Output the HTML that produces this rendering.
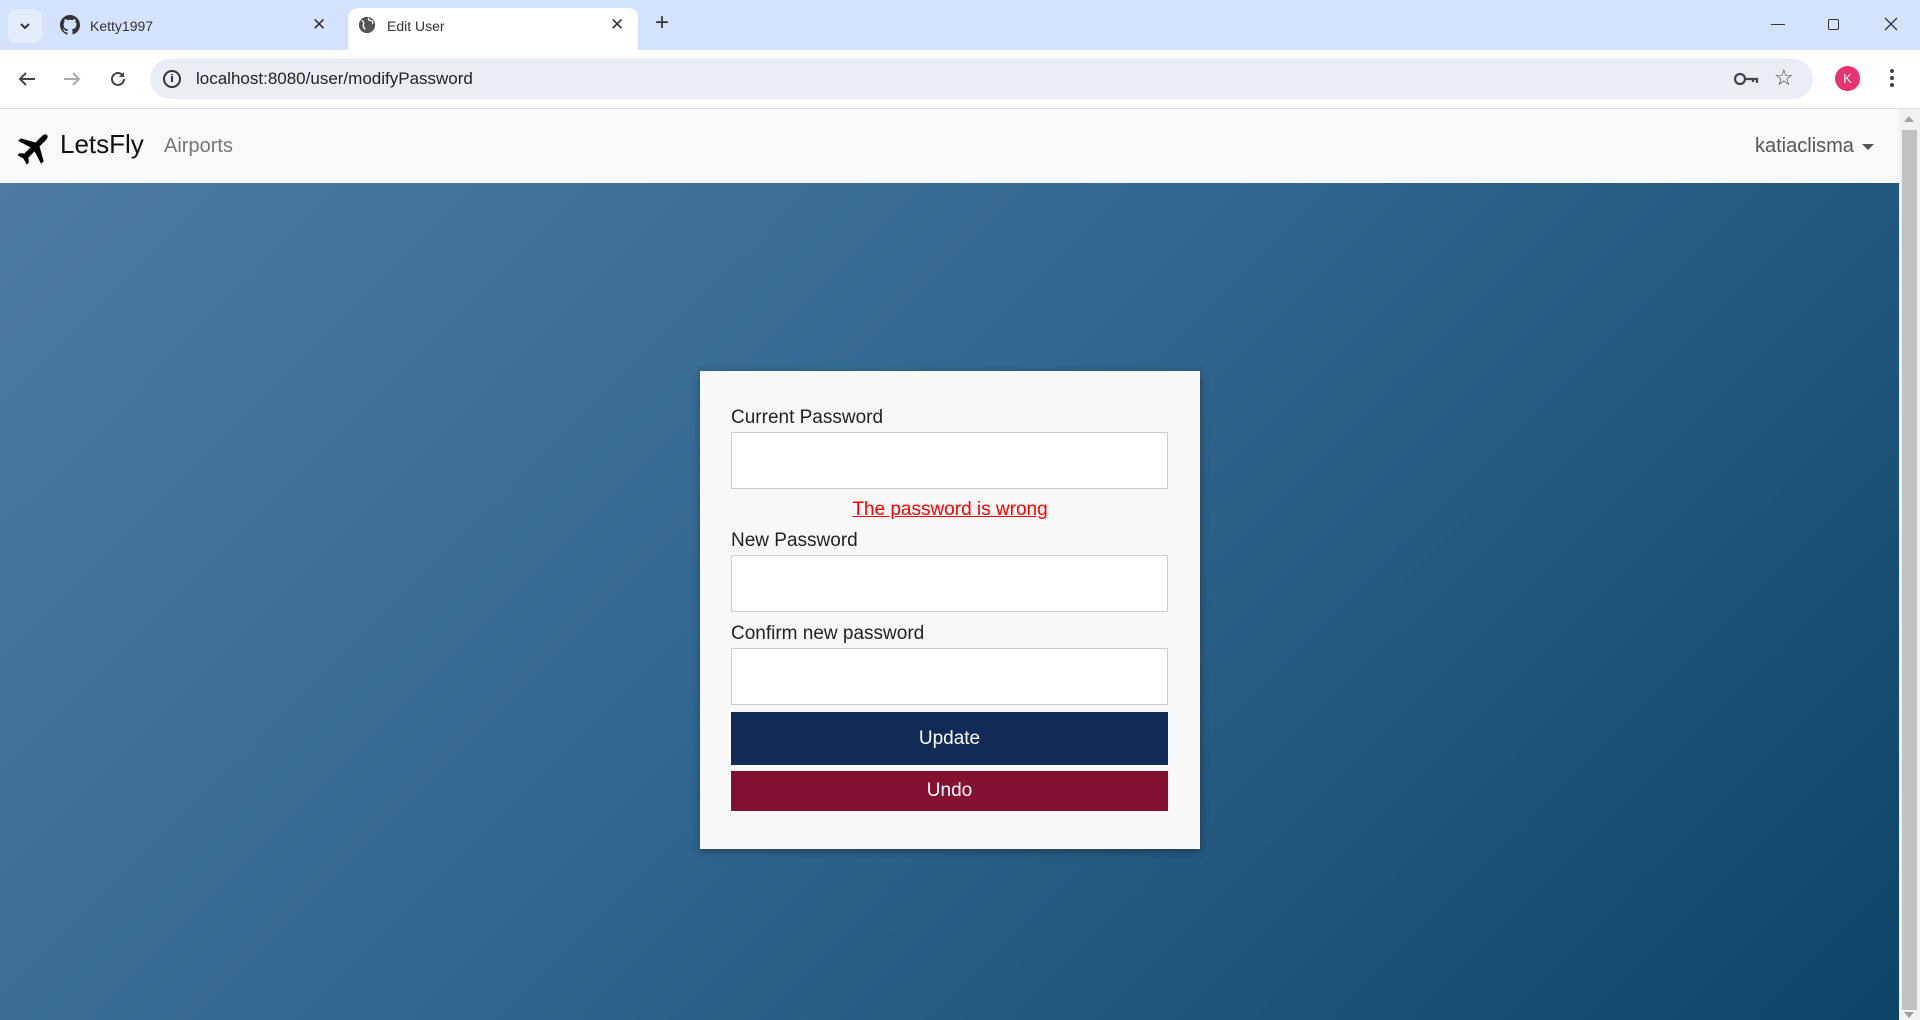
<!DOCTYPE html>
<html><head><meta charset="utf-8"><style>
*{margin:0;padding:0;box-sizing:border-box}
body{width:1920px;height:1020px;overflow:hidden;font-family:"Liberation Sans",sans-serif;position:relative;background:#fff}
.tabs{position:absolute;left:0;top:0;width:1920px;height:50px;background:#d3e3fd}
.tab{position:absolute;top:8px;height:42px;font-size:14px;color:#333}
.active{left:348px;width:290px;background:#fff;border-radius:10px 10px 0 0}
.toolbar{position:absolute;left:0;top:50px;width:1920px;height:59px;background:#fff;border-bottom:1px solid #dadce0}
.url{position:absolute;left:150px;top:9px;width:1663px;height:40px;border-radius:20px;background:#e9eef6}
.nav{position:absolute;left:0;top:109px;width:1899px;height:74px;background:#f8f9fa}
.main{position:absolute;left:0;top:183px;width:1899px;height:837px;background:linear-gradient(135deg,#4d7ba2 0%,#33678f 45%,#0f4469 100%)}
.sb{position:absolute;left:1899px;top:109px;width:21px;height:911px;background:#f1f1f1}
.card{position:absolute;left:700px;top:371px;width:500px;height:478px;background:#f8f8f8;box-shadow:0 2px 8px rgba(0,0,0,.35)}
.lbl{position:absolute;left:31px;font-size:19px;color:#222}
.inp{position:absolute;left:31px;width:437px;height:57px;background:#fff;border:1px solid #ccc}
.btn{position:absolute;left:31px;width:437px;color:#fff;font-size:19px;display:flex;align-items:center;justify-content:center}
</style></head><body>
<div class="tabs">
 <div style="position:absolute;left:8px;top:9px;width:34px;height:34px;border-radius:8px;background:#e3ecfb"></div>
 <svg style="position:absolute;left:19px;top:21px" width="12" height="10" viewBox="0 0 12 10"><path d="M2 3l4 4 4-4" stroke="#333" stroke-width="2" fill="none"/></svg>
 <div class="tab" style="left:58px;width:280px">
  <svg style="position:absolute;left:2px;top:7px" width="20" height="20" viewBox="0 0 16 16"><path fill="#333" d="M8 0C3.6 0 0 3.6 0 8c0 3.5 2.3 6.5 5.5 7.6.4.1.5-.2.5-.4v-1.4c-2.2.5-2.7-1-2.7-1-.4-.9-.9-1.2-.9-1.2-.7-.5.1-.5.1-.5.8.1 1.200.8 1.2.8.7 1.2 1.9.9 2.3.7.1-.5.3-.9.5-1.1-1.8-.2-3.6-.9-3.6-4 0-.9.3-1.6.8-2.1-.1-.2-.4-1 .1-2.1 0 0 .7-.2 2.2.8.6-.2 1.3-.3 2-.3s1.4.1 2 .3c1.5-1 2.2-.8 2.2-.8.4 1.1.2 1.9.1 2.100.5.6.8 1.3.8 2.1 0 3.1-1.9 3.7-3.6 3.9.3.3.5.8.5 1.5v2.2c0 .2.1.5.6.4C13.7 14.5 16 11.5 16 8c0-4.4-3.6-8-8-8z"/></svg>
  <span style="position:absolute;left:32px;top:10px">Ketty1997</span>
  <span style="position:absolute;left:254px;top:7px;font-size:17px">✕</span>
 </div>
 <div class="tab active">
  <svg style="position:absolute;left:10px;top:8px" width="18" height="18" viewBox="0 0 20 20"><circle cx="10" cy="10" r="9" fill="#555"/><path d="M4 5c2 1 3 3 2 5s1 3 2 5M12 2c-1 2 0 3 2 3s3 2 2 4" stroke="#fff" stroke-width="1.5" fill="none"/></svg>
  <span style="position:absolute;left:39px;top:10px">Edit User</span>
  <span style="position:absolute;left:262px;top:7px;font-size:17px">✕</span>
 </div>
 <div style="position:absolute;left:655px;top:9px;font-size:24px;color:#333">+</div>
 <div style="position:absolute;left:1771px;top:24px;width:14px;height:1px;background:#333"></div>
 <div style="position:absolute;left:1828px;top:19px;width:11px;height:11px;border:1px solid #333;border-radius:2px"></div>
 <svg style="position:absolute;left:1884px;top:17px" width="14" height="14"><path d="M1 1l12 12M13 1L1 13" stroke="#333" stroke-width="1.3"/></svg>
</div>
<div class="toolbar">
 <svg style="position:absolute;left:18px;top:21px" width="18" height="16"><path d="M17 8H2M8 2L2 8l6 6" stroke="#444" stroke-width="2" fill="none"/></svg>
 <svg style="position:absolute;left:63px;top:21px" width="18" height="16"><path d="M1 8h15M10 2l6 6-6 6" stroke="#aaa" stroke-width="2" fill="none"/></svg>
 <svg style="position:absolute;left:109px;top:20px" width="18" height="18" viewBox="0 0 18 18"><path d="M15 9a6 6 0 1 1-2-4.5" stroke="#444" stroke-width="2" fill="none"/><path d="M15 2v5h-5z" fill="#444"/></svg>
 <div class="url">
  <div style="position:absolute;left:13px;top:11px;width:18px;height:18px;border:2px solid #333;border-radius:50%;font-size:11px;text-align:center;line-height:14px;font-weight:bold">i</div>
  <div style="position:absolute;left:46px;top:10px;font-size:17px;color:#222">localhost:8080/user/modifyPassword</div>
  <svg style="position:absolute;left:1583px;top:12px" width="26" height="16" viewBox="0 0 26 16"><circle cx="7" cy="8" r="5" stroke="#444" stroke-width="2.2" fill="none"/><path d="M12 8h12v4M20 8v3" stroke="#444" stroke-width="2.2" fill="none"/></svg>
  <div style="position:absolute;left:1624px;top:6px;font-size:22px;color:#444">☆</div>
 </div>
 <div style="position:absolute;left:1835px;top:16px;width:25px;height:25px;border-radius:50%;background:#e8336f;color:#fff;font-size:13px;text-align:center;line-height:25px">K</div>
 <div style="position:absolute;left:1890px;top:19px;width:4px;height:4px;border-radius:50%;background:#444;box-shadow:0 7px 0 #444,0 14px 0 #444"></div>
</div>
<div class="nav">
 <svg style="position:absolute;left:14px;top:128px;top:19px" width="40" height="40" viewBox="0 0 24 24"><g transform="rotate(45 12 12)"><path fill="#000" d="M12 1c1.1 0 1.7 1.2 1.7 2.5V9l8 4.5v2.2l-8-2.5v5.3l2.3 1.8V22L12 21l-4 1v-1.7l2.3-1.8v-5.3l-8 2.5v-2.2l8-4.5V3.5C10.3 2.2 10.9 1 12 1z"/></g></svg>
 <div style="position:absolute;left:60px;top:20px;font-size:26px;color:#111">LetsFly</div>
 <div style="position:absolute;left:164px;top:26px;font-size:20px;color:#777">Airports</div>
 <div style="position:absolute;left:1755px;top:26px;font-size:20px;color:#555">katiaclisma</div>
 <div style="position:absolute;left:1862px;top:35px;border-left:6px solid transparent;border-right:6px solid transparent;border-top:6px solid #555"></div>
</div>
<div class="main">
 <div class="card" style="top:188px">
  <div class="lbl" style="top:36px">Current Password</div>
  <div class="inp" style="top:61px"></div>
  <div style="position:absolute;left:0;width:500px;top:128px;text-align:center;font-size:19px;color:#f00;text-decoration:underline">The password is wrong</div>
  <div class="lbl" style="top:159px">New Password</div>
  <div class="inp" style="top:184px"></div>
  <div class="lbl" style="top:252px">Confirm new password</div>
  <div class="inp" style="top:277px"></div>
  <div class="btn" style="top:341px;height:53px;background:#122b56">Update</div>
  <div class="btn" style="top:400px;height:40px;background:#841132">Undo</div>
 </div>
</div>
<div class="sb">
 <div style="position:absolute;left:5px;top:7px;border-left:5px solid transparent;border-right:5px solid transparent;border-bottom:6px solid #a0a0a0"></div>
 <div style="position:absolute;left:3px;top:21px;width:15px;height:880px;background:#c1c1c1"></div>
 <div style="position:absolute;left:5px;top:903px;border-left:5px solid transparent;border-right:5px solid transparent;border-top:6px solid #a0a0a0"></div>
</div>
</body></html>
